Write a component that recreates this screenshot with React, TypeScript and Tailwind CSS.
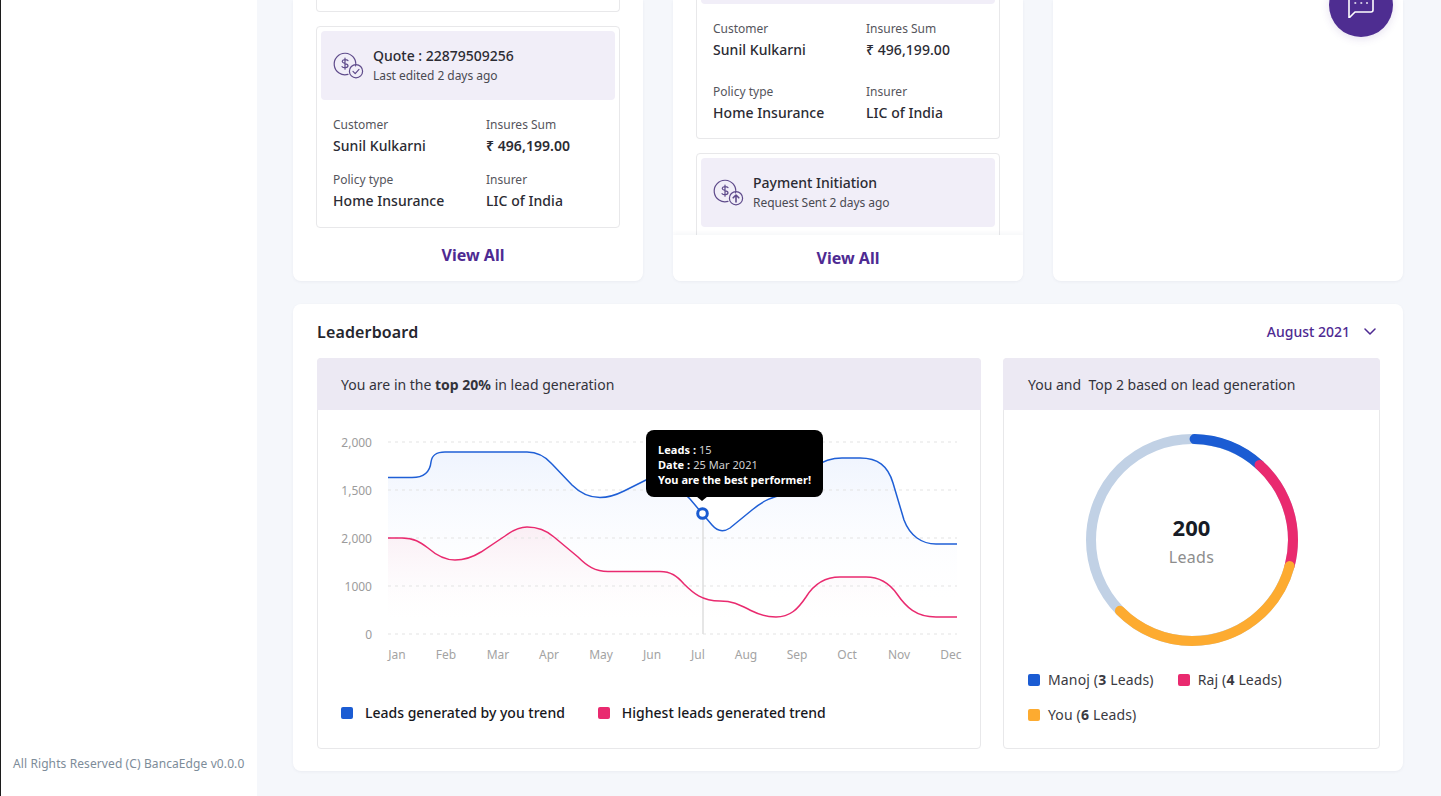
const font = { fontFamily: '"Noto Sans", sans-serif' };

const bluePath =
  "M388 477.5 L412 477.5 C424 477.5 430 472 431 462 C432 455 436 452 445 452 L527 452 C537 452 545 456 552 464 L572 485 C582 495 591 497.5 600 497.5 C609 497.5 616 495 624 491 L648 479 C660 474 680 488 690 499 L712 525 C718 532 724 532 730 528 L752 510 C764 500 772 497 786 494 C800 480 815 458 842 458 L860 458 C878 458 888 466 893 483 L904 520 C910 536 922 544 936 544 L957 544";
const redPath =
  "M388 538 L402 538 C414 538 420 542 428 548 C436 555 445 560 455 560 C465 560 473 557 481 552 L505 536 C513 530 519 527 527 527 C537 527 546 530 554 537 L578 557 C587 566 595 571.5 608 571.5 L660 571.5 C671 571.5 677 576 684 584 C693 593 702 601 720 601 C734 601 740 605 752 611 C762 616 768 617 776 617 C790 617 798 609 806 597 C814 584 824 577 840 577 L866 577 C880 577 890 584 897 594 C906 607 916 617 936 617 L957 617";

const months = [
  ["Jan", 397],
  ["Feb", 446],
  ["Mar", 498],
  ["Apr", 549],
  ["May", 601],
  ["Jun", 652],
  ["Jul", 698],
  ["Aug", 746],
  ["Sep", 797],
  ["Oct", 847],
  ["Nov", 899],
  ["Dec", 951],
] as const;

const yLabels = [
  ["2,000", 442],
  ["1,500", 490],
  ["2,000", 538],
  ["1000", 586],
  ["0", 634],
] as const;

function CoinIcon({ kind }: { kind: "check" | "up" }) {
  return (
    <svg width="32" height="28" viewBox="0 0 32 28" fill="none" stroke="#5f4b8b" strokeWidth="1.2" strokeLinecap="round" strokeLinejoin="round" className="shrink-0">
      <path d="M22.6 14 A10.8 10.8 0 1 0 15 22.4" />
      <circle cx="23" cy="19.2" r="6.6" />
      <path d="M15 8.6 C14 7.4 9.5 7 9.2 9.4 C9 11.6 15 11.2 15 13.8 C15 16 10.4 16.2 9 14.6 M12 6 L12 17.2" />
      {kind === "check" ? (
        <path d="M20 19.4 L22.2 21.6 L26 17.4" />
      ) : (
        <path strokeWidth="1.6" d="M23 23 L23 16.2 M20.2 18.8 L23 16 L25.8 18.8" />
      )}
    </svg>
  );
}

function ItemHeader({ title, sub, kind }: { title: string; sub: string; kind: "check" | "up" }) {
  return (
    <div className="flex h-[69px] items-center gap-2 rounded bg-[#f1eef8] pl-3">
      <CoinIcon kind={kind} />
      <div>
        <div className="text-[14px] leading-5 font-medium text-[#2b2b33]">{title}</div>
        <div className="mt-[1px] text-[12px] leading-[18px] tracking-[-0.05px] text-[#4a4a52]">{sub}</div>
      </div>
    </div>
  );
}

function Field({ label, value, bold }: { label: string; value: string; bold?: boolean }) {
  return (
    <div>
      <div className="text-[12px] leading-4 text-[#55555c]">{label}</div>
      <div className={`mt-[3px] text-[14px] leading-5 tracking-[0.05px] text-[#2b2b33] ${bold ? "font-semibold" : "font-medium"}`}>{value}</div>
    </div>
  );
}

function Fields({ rowGap, boldSum }: { rowGap: string; boldSum?: boolean }) {
  return (
    <div className={`grid grid-cols-[153px_1fr] pl-3 ${rowGap}`}>
      <Field label="Customer" value="Sunil Kulkarni" />
      <Field label="Insures Sum" value="₹ 496,199.00" bold={boldSum} />
      <Field label="Policy type" value="Home Insurance" />
      <Field label="Insurer" value="LIC of India" />
    </div>
  );
}

function LeadsChart() {
  return (
    <svg width="664" height="270" viewBox="317 410 664 270" className="-ml-px block" style={font}>
      <defs>
        <linearGradient id="blueFill" x1="0" y1="0" x2="0" y2="1">
          <stop offset="0" stopColor="#eff4fe" />
          <stop offset="1" stopColor="#ffffff" stopOpacity="0.2" />
        </linearGradient>
        <linearGradient id="redFill" x1="0" y1="0" x2="0" y2="1">
          <stop offset="0" stopColor="#faeef4" />
          <stop offset="1" stopColor="#ffffff" stopOpacity="0.3" />
        </linearGradient>
      </defs>
      <path d={`${bluePath} L957 600 L388 600 Z`} fill="url(#blueFill)" />
      <path d={`${redPath} L957 620 L388 620 Z`} fill="url(#redFill)" />
      {yLabels.map(([label, y]) => (
        <g key={y}>
          <line x1="388" x2="957" y1={y} y2={y} stroke="#e3e3e3" strokeWidth="1" strokeDasharray="3 4" />
          <text x="372" y={y + 5} textAnchor="end" fontSize="12" fill="#9c9c9c">
            {label}
          </text>
        </g>
      ))}
      {months.map(([label, x]) => (
        <text key={label} x={x} y="659" textAnchor="middle" fontSize="12" fill="#a3a3a3">
          {label}
        </text>
      ))}
      <line x1="703" x2="703" y1="513" y2="634" stroke="#dedede" strokeWidth="1.5" />
      <path d={bluePath} fill="none" stroke="#1f5fd6" strokeWidth="1.5" />
      <path d={redPath} fill="none" stroke="#e92a6f" strokeWidth="1.5" />
      <circle cx="702.5" cy="513.5" r="4.8" fill="#fff" stroke="#1a5bd1" strokeWidth="3" />
    </svg>
  );
}

const segments = [
  { color: "#1b5cd3", start: 1.5, len: 40.5 },
  { color: "#e92a6f", start: 42, len: 63 },
  { color: "#fdab30", start: 105, len: 120.5 },
];

function Donut() {
  return (
    <div className="relative h-[212px] w-[212px]">
      <svg width="212" height="212" viewBox="0 0 212 212" fill="none" className="block">
        <circle cx="106" cy="106" r="101" stroke="#c1d1e5" strokeWidth="10" />
        {segments.map((s) => (
          <circle
            key={s.color}
            cx="106"
            cy="106"
            r="101"
            stroke={s.color}
            strokeWidth="10"
            strokeLinecap="round"
            pathLength={360}
            strokeDasharray={`${s.len} ${360 - s.len}`}
            strokeDashoffset={-s.start}
            transform="rotate(-90 106 106)"
          />
        ))}
      </svg>
      <div className="absolute inset-0 flex flex-col items-center justify-center">
        <div className="text-[22px] leading-[30px] font-bold text-[#171c26]">200</div>
        <div className="mt-[3px] text-[16px] leading-[24px] tracking-[0.3px] text-[#8d8d8d]">Leads</div>
      </div>
    </div>
  );
}

function DonutLegend({ color, name, count }: { color: string; name: string; count: number }) {
  return (
    <div className="flex items-center gap-2 text-[14px] leading-5 tracking-[0.15px] text-[#3a3a42]">
      <span className={`h-3 w-3 rounded-[2px] ${color}`} />
      <span>
        {name} (<b className="font-bold">{count}</b> Leads)
      </span>
    </div>
  );
}

export default function App() {
  return (
    <div className="flex h-[796px] w-[1441px] overflow-hidden bg-[#f5f7fb]" style={font}>
      {/* Sidebar */}
      <aside className="flex w-[257px] shrink-0 flex-col justify-end border-l border-[#1c1c1c] bg-white pb-[24px]">
        <p className="pl-3 text-[12px] leading-4 tracking-[0.1px] whitespace-nowrap text-[#7d8c99]">All Rights Reserved (C) BancaEdge v0.0.0</p>
      </aside>

      {/* Main */}
      <main className="flex flex-1 flex-col pr-[38px] pl-[36px]">
        <div className="grid h-[281px] shrink-0 grid-cols-[350px_350px_350px] gap-[30px]">
          {/* Quotes */}
          <section className="flex flex-col justify-end overflow-hidden rounded-b-lg bg-white px-[23px] shadow-[0_1px_3px_rgba(60,70,110,0.06)]">
            <div className="h-[40px] shrink-0 rounded-b border border-t-0 border-[#e8e8ea]" />
            <div className="mt-[14px] shrink-0 rounded border border-[#e8e8ea] p-1">
              <ItemHeader title="Quote : 22879509256" sub="Last edited 2 days ago" kind="check" />
              <div className="pt-[17px] pb-[12px]">
                <Fields rowGap="gap-y-[16px]" boldSum />
              </div>
            </div>
            <button className="h-[53px] shrink-0 pl-[10px] text-[16px] font-bold text-[#4e2a92]">View All</button>
          </section>

          {/* Policies */}
          <section className="flex flex-col justify-end overflow-hidden rounded-b-lg bg-white shadow-[0_1px_3px_rgba(60,70,110,0.06)]">
            <div className="flex min-h-0 flex-1 flex-col overflow-hidden px-[23px]">
              <div className="shrink-0 rounded-b border border-t-0 border-[#e8e8ea] px-1">
                <div className="h-[4px] rounded-b bg-[#f1eef8]" />
                <div className="pt-[17px] pb-[15px]">
                  <Fields rowGap="gap-y-[24px]" />
                </div>
              </div>
              <div className="mt-[14px] shrink-0 rounded border border-[#e8e8ea] p-1 pb-8">
                <ItemHeader title="Payment Initiation" sub="Request Sent 2 days ago" kind="up" />
              </div>
            </div>
            <button className="h-[46px] shrink-0 bg-white text-[16px] font-bold text-[#4e2a92] shadow-[0_-2px_4px_rgba(60,70,110,0.05)]">View All</button>
          </section>

          <section className="rounded-b-lg bg-white shadow-[0_1px_3px_rgba(60,70,110,0.06)]" />
        </div>

        {/* Leaderboard */}
        <section className="mt-[23px] h-[467px] w-[1110px] shrink-0 rounded-lg bg-white px-6 shadow-[0_1px_3px_rgba(60,70,110,0.06)]">
          <div className="flex h-[54px] items-center justify-between">
            <h2 className="mt-[1px] text-[16px] font-semibold tracking-[0.15px] text-[#26262e]">Leaderboard</h2>
            <div className="flex items-center gap-[14px] pr-[3px] text-[14px] font-medium text-[#4e2a92]">
              August 2021
              <svg width="12" height="7" viewBox="0 0 12 7" fill="none" stroke="#4e2a92" strokeWidth="1.5" strokeLinecap="round" strokeLinejoin="round">
                <path d="M1 1 L6 6 L11 1" />
              </svg>
            </div>
          </div>

          <div className="grid grid-cols-[664px_377px] gap-[22px]">
            <div className="relative h-[391px] rounded border border-[#e8e8ea]">
              <div className="-mx-px -mt-px flex h-[52px] items-center rounded-t bg-[#ece9f3] pl-6 text-[14px] text-[#33333b]">
                <span>
                  You are in the <b className="font-bold">top 20%</b> in lead generation
                </span>
              </div>
              <LeadsChart />
              <div className="mt-[23px] flex items-center pl-[23px] text-[14px] leading-5 font-medium text-[#17171c]">
                <span className="h-3 w-3 rounded-[2px] bg-[#1b5cd3]" />
                <span className="ml-3">Leads generated by you trend</span>
                <span className="ml-[33px] h-3 w-3 rounded-[2px] bg-[#e92a6f]" />
                <span className="ml-3">Highest leads generated trend</span>
              </div>

              {/* Tooltip */}
              <div className="absolute top-[71px] left-[328px] h-[67px] w-[177px] rounded-lg bg-black pt-[12px] pl-3 text-[11px] leading-[15px] tracking-[0.05px] text-[#d0d0d0]">
                <div>
                  <b className="font-bold text-white">Leads :</b> 15
                </div>
                <div>
                  <b className="font-bold text-white">Date :</b> 25 Mar 2021
                </div>
                <div className="font-bold text-white">You are the best performer!</div>
                <span className="absolute top-[66px] left-[50px] h-0 w-0 border-x-[6px] border-t-[5px] border-x-transparent border-t-black" />
              </div>
            </div>

            <div className="h-[391px] rounded border border-[#e8e8ea]">
              <div className="-mx-px -mt-px flex h-[52px] items-center rounded-t bg-[#ece9f3] pl-[25px] text-[14px] whitespace-pre text-[#33333b]">You and  Top 2 based on lead generation</div>
              <div className="flex justify-center pt-[24px]">
                <Donut />
              </div>
              <div className="mt-[24px] flex flex-col gap-[15px] pl-6">
                <div className="flex gap-6">
                  <DonutLegend color="bg-[#1b5cd3]" name="Manoj" count={3} />
                  <DonutLegend color="bg-[#e92a6f]" name="Raj" count={4} />
                </div>
                <DonutLegend color="bg-[#fdab30]" name="You" count={6} />
              </div>
            </div>
          </div>
        </section>
      </main>

      {/* Chat button */}
      <button className="fixed top-[-27px] left-[1329px] flex h-16 w-16 items-center justify-center rounded-full bg-[#4e2d91] shadow-[0_2px_8px_rgba(78,45,145,0.15)]">
        <svg width="26" height="26" viewBox="0 0 26 26" fill="none" stroke="#fff" strokeWidth="1.6" strokeLinejoin="round">
          <path d="M1 1 H25 V18 Q25 20 23 20 H7 L1 26 Z" />
          <path d="M7 11 H7.6 M13 11 H13.6 M18.7 11 H19.3" strokeLinecap="round" strokeWidth="1.6" />
        </svg>
      </button>
    </div>
  );
}
